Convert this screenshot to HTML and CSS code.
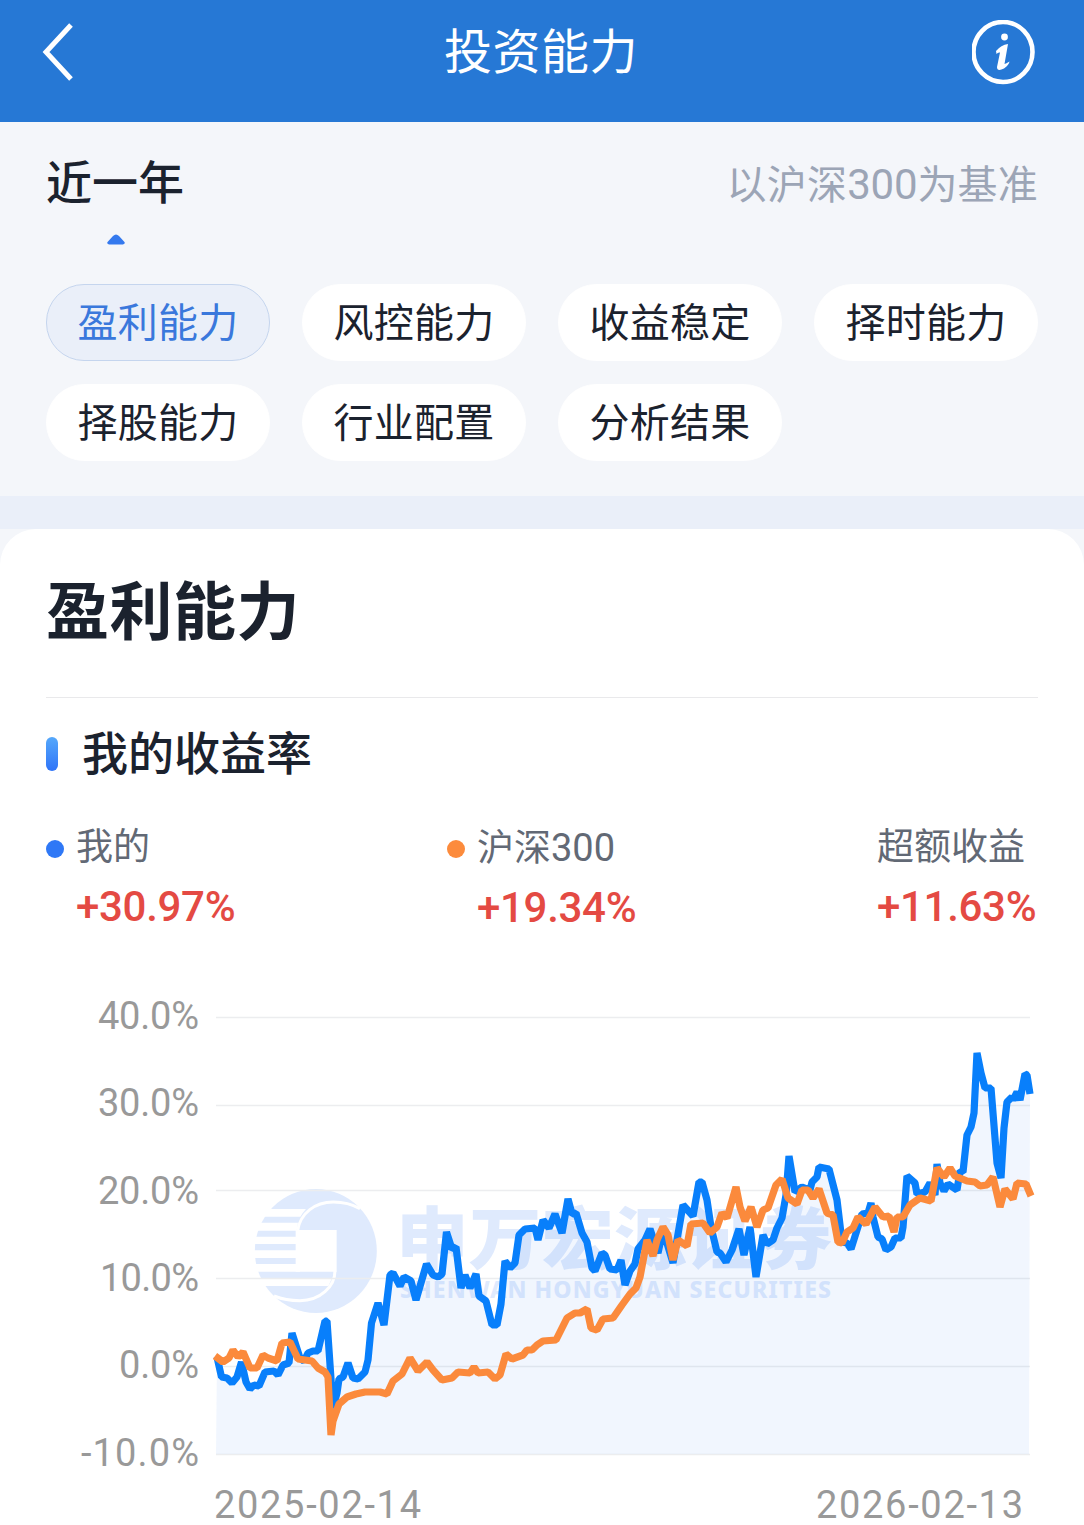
FILE: index.html
```html
<!DOCTYPE html>
<html lang="zh-CN">
<head>
  <meta charset="UTF-8">
  <title>投资能力</title>
  <link rel="stylesheet" href="styles.css">
</head>
<body>

  <header class="topbar">
    <svg class="back" width="34" height="60" viewBox="0 0 34 60">
      <path d="M30 3 L5 30 L30 57" fill="none" stroke="#fff" stroke-width="5"/>
    </svg>
    <h1>投资能力</h1>
    <svg class="info" width="64" height="66" viewBox="0 0 64 66">
      <ellipse cx="31" cy="32" rx="29.5" ry="30" fill="none" stroke="#fff" stroke-width="4.6"/>
      <circle cx="32.500" cy="17" r="3.4" fill="#fff"/>
      <path d="M24 31 Q29 25 36 24 L32.500 44 Q34 43.500 37.500 41.500 Q37 45 32 48.500 Q25 52 25 47 L28 32.500 Q26 32 24.500 34 Z" fill="#fff"/>
    </svg>
  </header>

  <section class="filters">
    <div class="periodo">
      <span class="period">近一年</span>
      <span class="benchmark">以沪深<span class="num">300</span>为基准</span>
    </div>
    <svg class="caret" width="18" height="11" viewBox="0 0 18 11">
      <path d="M2 10.500 Q-1 9.500 1 7.500 L6 2 Q9 -1 12 2 L17 7.500 Q19 9.500 16 10.500 Z" fill="#3479ee"/>
    </svg>
    <div class="tabs">
      <button class="tab active">盈利能力</button>
      <button class="tab">风控能力</button>
      <button class="tab">收益稳定</button>
      <button class="tab">择时能力</button>
      <button class="tab">择股能力</button>
      <button class="tab">行业配置</button>
      <button class="tab">分析结果</button>
    </div>
  </section>

  <div class="band"></div>

  <main class="card">
    <h2>盈利能力</h2>
    <h3><span>我的收益率</span></h3>

    <div class="legend">
      <div class="item">
        <i class="dot blue"></i>
        <div><p>我的</p><strong>+30.97%</strong></div>
      </div>
      <div class="item">
        <i class="dot orange"></i>
        <div><p>沪深<span class="num">300</span></p><strong>+19.34%</strong></div>
      </div>
      <div class="item">
        <div><p>超额收益</p><strong>+11.63%</strong></div>
      </div>
    </div>

    <svg class="chart" width="1084" height="545" viewBox="0 980 1084 545">
      <!-- watermark -->
      <g transform="translate(200 1180) scale(0.3333)">
        <ellipse cx="347.500" cy="213" rx="183" ry="186" fill="#dfeafd"/>
        <g fill="#fff">
          <path d="M160 87 H318 Q308 98 301 110 H160 Z"/>
          <path d="M160 128 H294 L290 152 H160 Z"/>
          <path d="M160 170 H300 V192 H160 Z"/>
          <path d="M160 211 H300 V234 H160 Z"/>
          <path d="M160 252 H300 V275 H160 Z"/>
          <path d="M287 150 H410 V275 H287 Z"/>
          <path d="M160 295 H396 L385 318 H160 Z"/>
        </g>
        <path d="M293 152 C300 100 345 66 400 66 C430 66 455 72 480 86" fill="none" stroke="#fff" stroke-width="9"/>
        <path d="M405 272 C405 320 360 362 300 362 C270 362 250 359 222 348" fill="none" stroke="#fff" stroke-width="9"/>
      </g>
      <text class="mark-cn" x="396" y="1264" textLength="436" lengthAdjust="spacingAndGlyphs">申万宏源证券</text>
      <text class="mark-en" x="400" y="1298" textLength="431">SHENWAN HONGYUAN SECURITIES</text>

      <g class="grid">
        <path d="M216 1017.500 H1030"/>
        <path d="M216 1105.500 H1030"/>
        <path d="M216 1190.500 H1030"/>
        <path d="M216 1278.500 H1030"/>
        <path d="M216 1366.500 H1030"/>
        <path d="M216 1454.500 H1030"/>
      </g>

      <g class="axis" text-anchor="end">
        <text x="199" y="1029" textLength="101">40.0%</text>
        <text x="199" y="1116" textLength="101">30.0%</text>
        <text x="199" y="1204" textLength="101">20.0%</text>
        <text x="199" y="1291" textLength="99">10.0%</text>
        <text x="199" y="1378" textLength="80">0.0%</text>
        <text x="199" y="1466" textLength="118">-10.0%</text>
      </g>
      <g class="axis">
        <text x="214" y="1518" textLength="207">2025-02-14</text>
        <text x="816" y="1518" textLength="207">2026-02-13</text>
      </g>

      <path id="area" class="area"/>
      <polyline id="mine" class="line mine" points="217,1357 221.500,1377 227,1378 232,1383 237,1377 241.500,1362 246,1382 250,1389 254,1385 259,1386 265,1372 274,1371 278,1375 283,1365 289,1363 292,1333 300,1358 304,1361 308,1353 313,1351 318,1351 325,1321 327,1321 333,1408 337,1393 339,1379 343,1377 348,1363 353,1378 358,1379 365,1372 368,1360 371.500,1323 378,1303 384,1325 390,1275 393,1273 400,1286 404,1277 411,1281 416,1300 426.500,1264 433,1275 438,1277 442,1274 446.500,1232 452,1249 456,1247 461,1288 465,1275 470,1288 476,1274 479,1296 486,1301 492,1325 497,1325 501,1304 505,1261 510,1268 515,1263 519,1235 525,1229 535,1228 538,1240 543,1220 549,1228 555,1214 562,1233 568,1199 572,1214 576,1213 582,1233 587,1242 592,1268 595,1271 602,1253 605,1255 610,1269 617,1270 621,1260 625,1285 630,1271 635,1264 638,1249 645,1240 650,1229 658,1253 663,1230 673,1263 683,1205 693,1216 699,1182 702,1182 707,1200 711,1227 717,1252 720,1253 726,1262 732,1250 739,1229 744,1255 750,1227 756,1277 763,1235 767,1244 773,1240 777,1228 782,1218 786,1195 789,1156 795,1192 802,1187 810,1190 812,1182 817,1177 819,1167 829,1169 837,1200 842,1242 847,1243 851,1249 862,1214 868,1213 871,1203 873,1217 878,1237 882,1239 886,1250 891,1247 895,1238 901,1238 903,1227 907,1176 915,1183 917,1194 925,1192 930,1183 935,1195 937,1164 940,1183 944,1191 948,1184 957,1190 960,1171 963,1172 967,1135 971,1127 974,1113 977,1053 981,1073 985,1088 991,1088 997,1163 1001,1178 1004,1128 1007,1102 1012,1097 1013,1100 1017,1092 1020,1100 1025,1074 1027,1075 1030,1094"/>
      <polyline class="line csi" points="215,1356 223,1362 229,1358 233,1350 238,1357 243,1352 250,1368 257,1368 263,1355 268,1358 277,1361 282,1343 290,1342 298,1359 312,1361 318,1368 325,1372 328,1377 331,1435 333,1421 339,1404 347,1397 356,1394 365,1392 380,1392 387,1394 393,1381 402,1374 410,1358 418,1371 427,1362 433,1370 442,1380 452,1378 458,1372 470,1373 474,1367 478,1373 488,1372 495,1379 500,1375 506,1354 512,1359 523,1355 527,1350 532,1350 537,1345 543,1341 556,1340 567,1318 575,1313 580,1313 587,1309 591,1328 597,1330 603,1319 613,1318 622,1305 630,1294 636,1288 640,1277 647,1240 653,1256 657,1240 663,1227 668,1235 673,1260 678,1240 687,1246 691,1224 703,1223 710,1233 717,1227 722,1213 727,1218 736,1187 740,1207 745,1221 751,1207 757,1227 763,1210 768,1208 776,1185 782,1179 788,1198 797,1204 802,1190 808,1190 813,1198 819,1189 827,1213 833,1215 838,1242 842,1243 847,1232 853,1228 858,1217 866,1224 875,1207 883,1217 889,1216 894,1232 897,1217 903,1217 910,1205 920,1198 931,1201 937,1168 944,1177 950,1168 955,1176 967,1181 975,1182 980,1186 987,1185 993,1177 1000,1207 1005,1189 1013,1199 1017,1183 1026,1184 1031,1196"/>
    </svg>
  </main>

  <script>
    // fill under the blue line, down to the -10% gridline
    const pts = document.getElementById("mine").getAttribute("points");
    document.getElementById("area").setAttribute("d", `M216,1454 L${pts} L1029,1454 Z`);
  </script>

</body>
</html>
```
FILE: styles.css
```css
* {
  box-sizing: border-box;
  margin: 0;
  padding: 0;
}

body {
  width: 1084px;
  height: 1525px;
  overflow: hidden;
  background-color: #f4f6fa;
  color: #1b222e;
  font-family: Roboto, "Noto Sans CJK SC", sans-serif;
}

.topbar {
  height: 122px;
  padding: 20px 48px 0 43px;
  background-color: #2678d5;
  color: #fff;
  display: grid;
  grid-template-columns: 1fr auto 1fr;
  align-items: start;
}

.topbar h1 {
  padding: 2px 0 0 3px;
  font-size: 48px;
  font-weight: 400;
  line-height: 62px;
  letter-spacing: 0.5px;
}

.back {
  margin: 2px 0 0 -2px;
}

.info {
  justify-self: end;
}

.filters {
  height: 374px;
  padding: 28px 46px 0;
}

.periodo {
  display: flex;
  justify-content: space-between;
  height: 70px;
  line-height: 66px;
}

.period {
  font-size: 46px;
  font-weight: 500;
}

.benchmark {
  padding-top: 2px;
  font-size: 40px;
  letter-spacing: 0.2px;
  color: #9ca5b6;
}

.benchmark .num {
  font-size: 42px;
  letter-spacing: -0.2px;
}

.caret {
  display: block;
  margin: 14px 0 39px 61px;
}

.tabs {
  display: grid;
  grid-template-columns: repeat(4, 224px);
  gap: 23px 32px;
}

.tab {
  height: 77px;
  padding-bottom: 6px;
  border: 1px solid #fff;
  border-radius: 38px;
  background-color: #fff;
  color: #1b222e;
  font-family: inherit;
  font-size: 40px;
  letter-spacing: 0.2px;
  white-space: nowrap;
}

.tab.active {
  background-color: #eaeff9;
  border-color: #c5d5ee;
  color: #3a78dc;
}

.band {
  height: 33px;
  background-color: #eaeff9;
}

.card {
  height: 996px;
  background-color: #fff;
  border-radius: 36px 36px 0 0;
}

.card h2 {
  height: 169px;
  margin: 0 46px;
  border-bottom: 1px solid #e9e9eb;
  font-size: 63px;
  font-weight: 700;
  line-height: 168px;
  letter-spacing: 0.5px;
}

.card h3 {
  display: flex;
  align-items: center;
  gap: 24px;
  height: 111px;
  padding-left: 46px;
  font-size: 46px;
  font-weight: 500;
}

.card h3 span {
  padding-bottom: 7px;
}

.card h3::before {
  content: "";
  width: 12px;
  height: 34px;
  border-radius: 6px;
  background: linear-gradient(#55a8fb, #2f74f8);
}

.legend {
  display: grid;
  grid-template-columns: 401px 430px 1fr;
  height: 171px;
  padding: 9px 0 0 46px;
}

.item {
  display: flex;
  gap: 12px;
}

.item p {
  color: #626975;
  font-size: 37px;
  line-height: 60px;
}

.item .num {
  font-size: 38px;
}

.item strong {
  display: block;
  color: #e44a43;
  font-size: 42px;
  font-weight: 500;
  line-height: 58px;
  letter-spacing: -0.3px;
}

.dot {
  width: 18px;
  height: 18px;
  margin-top: 22px;
  border-radius: 50%;
}

.dot.blue {
  background-color: #2f78f6;
}

.dot.orange {
  background-color: #fc8b3c;
}

.chart {
  display: block;
}

.mark-cn {
  font-family: "Noto Sans CJK SC", sans-serif;
  font-size: 68px;
  font-weight: 900;
  fill: #dfeafd;
}

.mark-en {
  font-family: "Noto Sans", sans-serif;
  font-size: 23px;
  font-weight: 800;
  fill: #dfeafd;
}

.grid {
  stroke: #ecedef;
  stroke-width: 1.6;
}

.axis {
  font-size: 38px;
  fill: #999;
}

.area {
  fill: #0a66f5;
  fill-opacity: 0.06;
}

.line {
  fill: none;
  stroke-width: 7.2;
  stroke-linejoin: bevel;
}

.mine {
  stroke: #087ffb;
}

.csi {
  stroke: #fb8a3c;
}
```
